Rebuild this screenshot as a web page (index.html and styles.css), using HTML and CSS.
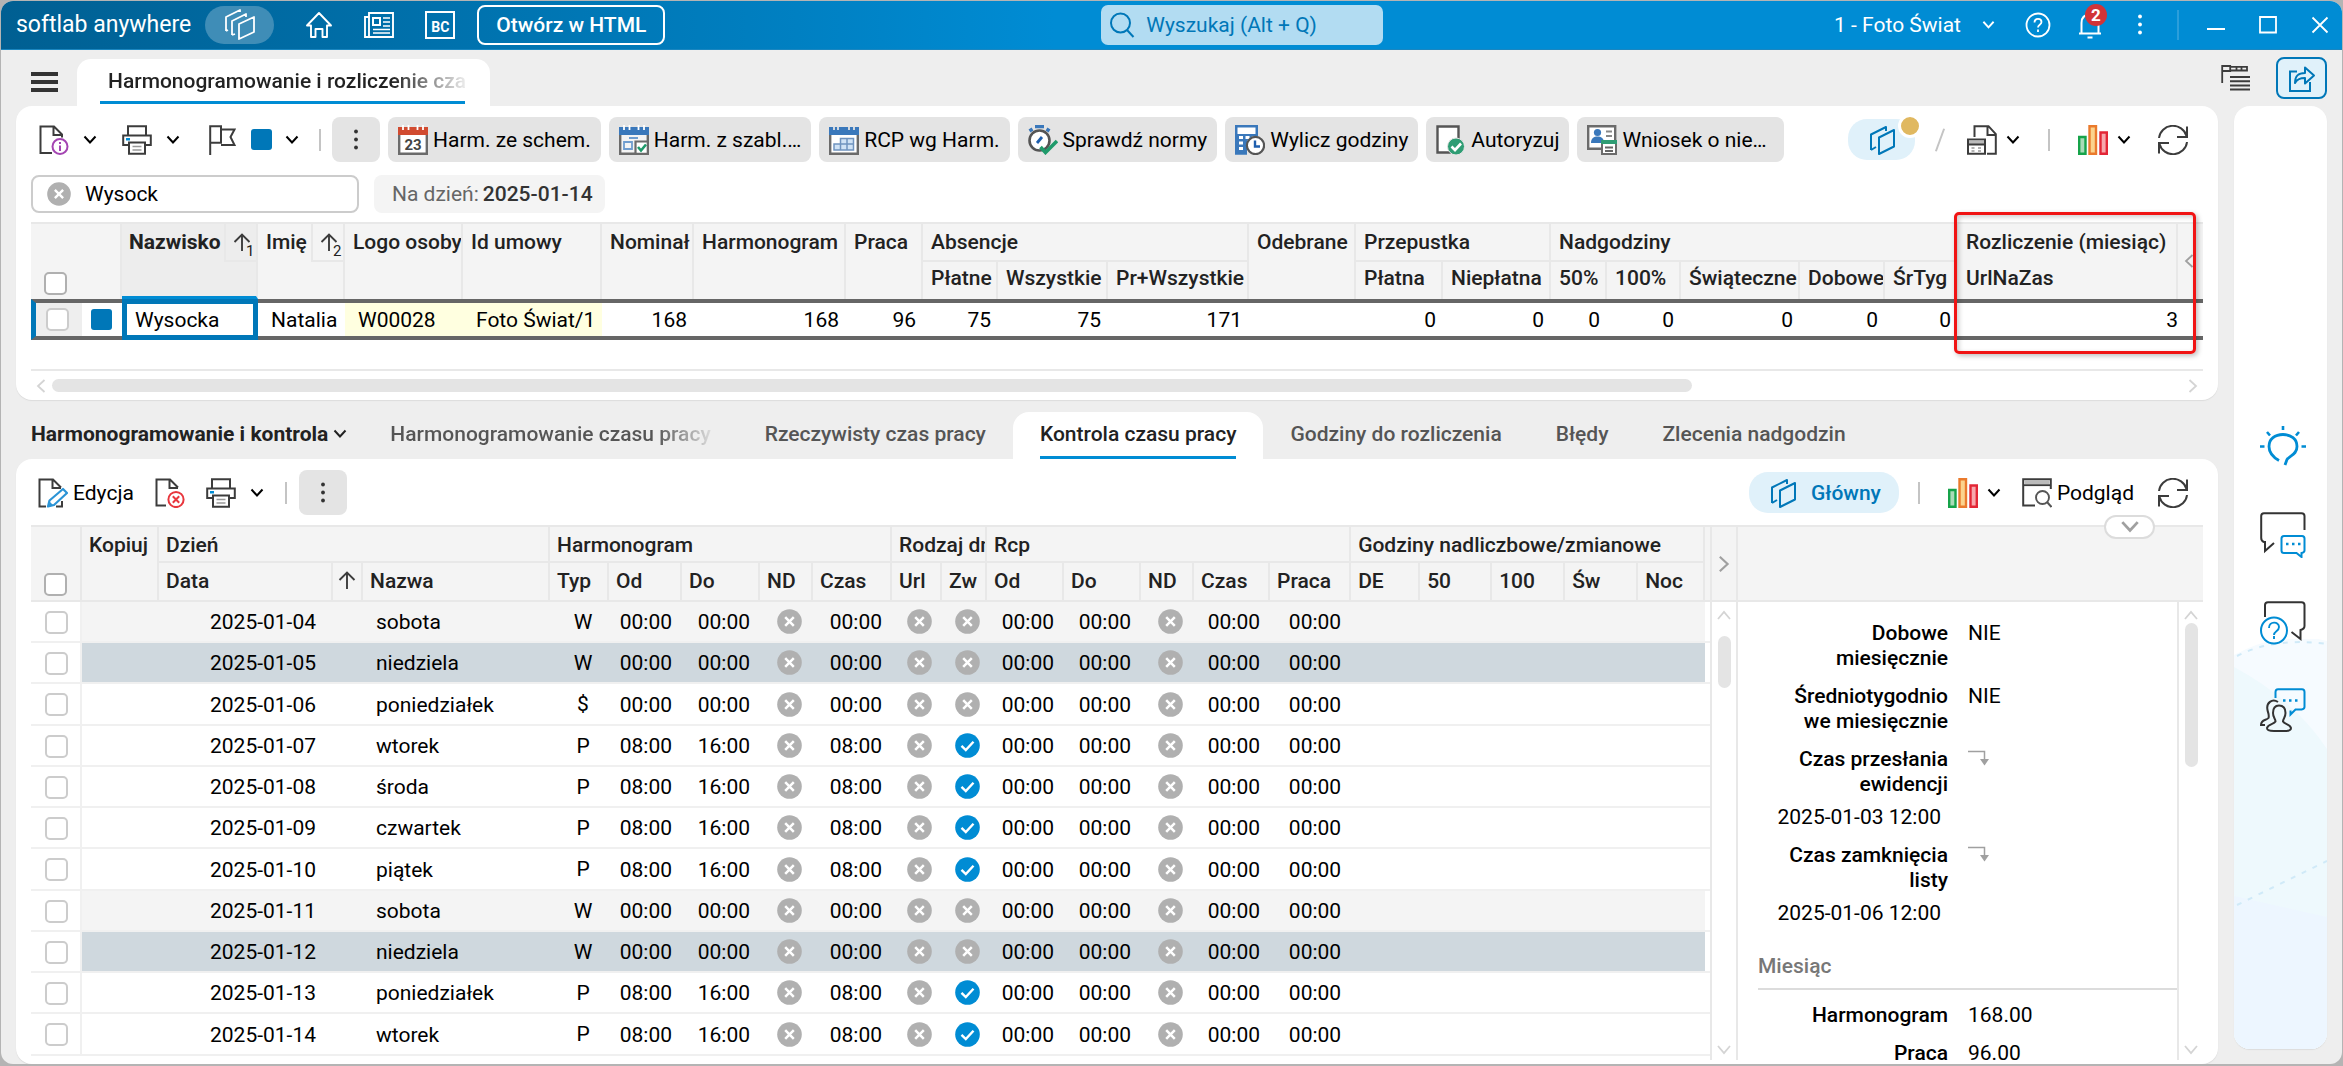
FILE: index.html
```html
<!DOCTYPE html>
<html lang="pl">
<head>
  <meta charset="UTF-8">
  <meta name="viewport" content="width=device-width, initial-scale=1.0">
  <title>softlab anywhere</title>
  <link rel="stylesheet" href="styles.css">
</head>
<body>
  <!-- Icon sprite -->
  <svg class="sprite" aria-hidden="true">
    <symbol id="i-chevron" viewBox="0 0 14 10"><path d="M1.500 1.500 7 7.500l5.500-6" fill="none" stroke="currentColor" stroke-width="2"/></symbol>
    <symbol id="i-more" viewBox="0 0 30 30"><g fill="currentColor"><circle cx="15" cy="6.500" r="1.900"/><circle cx="15" cy="14.500" r="1.900"/><circle cx="15" cy="22.500" r="1.900"/></g></symbol>
    <symbol id="i-cards" viewBox="0 0 30 30"><path d="M4 25V9.500L19 2v4M4 25l5-3M12 12.500 27 5v16.500L12 29z" fill="none" stroke="currentColor" stroke-width="2" stroke-linejoin="round"/></symbol>
    <symbol id="i-stack" viewBox="0 0 34 32"><path d="M3 22V8L17 1v2M3 22l2-1M9 26V12L23 5v3M9 26l3-1M16 15l15-7v15l-15 7z" fill="none" stroke="currentColor" stroke-width="1.800" stroke-linejoin="round"/></symbol>
    <symbol id="i-doc-info" viewBox="0 0 30 30"><path d="M13 28H1.500V1.500H15l8 8v3M14.500 2v8H23" fill="none" stroke="#3c3c3c" stroke-width="2"/><circle cx="21" cy="21.500" r="7.500" fill="#fff" stroke="#a445b2" stroke-width="2"/><path d="M21 17v2M21 20.500v5.500" stroke="#a445b2" stroke-width="2"/></symbol>
    <symbol id="i-print" viewBox="0 0 30 30"><path d="M6 10V1.200h18V10M6 20H1.200V10.500h27.600V20H24" fill="none" stroke="#3c3c3c" stroke-width="2"/><path d="M7 17.500h16v11.200H7z" fill="#fff" stroke="#3c3c3c" stroke-width="2"/><path d="M10.500 21.500h9M10.500 25h9" stroke="#999" stroke-width="1.600"/><path d="M4 13h4v2.500H4z" fill="#008cd4"/></symbol>
    <symbol id="i-flag" viewBox="0 0 30 30"><path d="M2.200 30V1.200H13v16.500H2.200M13 4.500h13.500l-4 7.500 4 8H13" fill="none" stroke="#3c3c3c" stroke-width="2"/></symbol>
    <symbol id="i-cal-check" viewBox="0 0 30 30"><path d="M1.200 8h27.600v20.800H1.200z" fill="#f4f4f4" stroke="#6b6b6b" stroke-width="2.400"/><path d="M0 2h30v8H0z" fill="#3a78bb"/><path d="M5 0v5M10.500 0v5M19.500 0v5M25 0v5" stroke="#fff" stroke-width="1.800"/><path d="M5 17h8v7H5zM10 13h9" fill="none" stroke="#6f9dcf" stroke-width="1.800"/><path d="M16.500 16.500h12.300v12.300H16.500z" fill="#fff" stroke="#6b6b6b" stroke-width="2.200"/><path d="m19 22 3 3.500 5-6" fill="none" stroke="#1f9a6b" stroke-width="2.600"/></symbol>
    <symbol id="i-cal-grid" viewBox="0 0 30 30"><path d="M1.200 8h27.600v20.800H1.200z" fill="#fff" stroke="#6b6b6b" stroke-width="2.400"/><path d="M0 2h30v8H0z" fill="#3a78bb"/><path d="M5 0v5M9 0v5M20 0v5M25 0v5" stroke="#e4e4e4" stroke-width="1.800"/><path d="M5 19h6.500v6H5zM11.500 19H18v6h-6.500zM18 19h6.500v6H18zM11.500 13.500H18V19h-6.500zM18 13.500h6.500V19H18z" fill="#cfe2f5" stroke="#6f93bf" stroke-width="1.500"/></symbol>
    <symbol id="i-stopwatch" viewBox="0 0 30 30"><path d="M7 1.500h9M1.500 6l3-2M18.500 4l3 2" stroke="#3a78bb" stroke-width="3.400"/><circle cx="11.500" cy="15.500" r="10" fill="#fff" stroke="#555" stroke-width="2.600"/><path d="m9 18 5-6" stroke="#1f5fae" stroke-width="2.800"/><path d="m12.500 22 5 5.500L29 16" fill="none" stroke="#1f9a6b" stroke-width="3.600"/></symbol>
    <symbol id="i-calc-clock" viewBox="0 0 30 30"><path d="M1.200 1.200h20.600V28.500H1.200z" fill="#3a78bb" stroke="#3a78bb" stroke-width="2.400"/><path d="M2.500 2.500h18V9h-18z" fill="#fff"/><path d="M4 12.500h4M10.500 12.500h4M4 18h4M4 23.500h4" stroke="#fff" stroke-width="3.200"/><path d="M12 30V16l5-4.500h6V30z" fill="#e4e4e4"/><circle cx="20.500" cy="20.500" r="8.600" fill="#fff" stroke="#555" stroke-width="2.200"/><path d="M20 15.500v6h5" fill="none" stroke="#1f5fae" stroke-width="2.400"/></symbol>
    <symbol id="i-doc-ok" viewBox="0 0 30 30"><path d="M1.500 1.500h21v26h-21z" fill="#fff" stroke="#555" stroke-width="2.400"/><circle cx="20" cy="21.500" r="8.500" fill="#2f9d74" stroke="#e4e4e4" stroke-width="1"/><path d="m15.500 21.500 3.500 3.500 6-6.500" fill="none" stroke="#fff" stroke-width="2.600"/></symbol>
    <symbol id="i-request" viewBox="0 0 30 30"><path d="M1.200 1.200h27v22.600h-27z" fill="#fff" stroke="#6b6b6b" stroke-width="2.400"/><circle cx="10.500" cy="7.500" r="3.600" fill="#3a78bb"/><path d="M4 18c0-5 3-6.500 6.500-6.500S17 13 17 18z" fill="#3a78bb"/><path d="M19 6.500h6M19 11h6" stroke="#888" stroke-width="1.800"/><path d="M15 16h14v13H15z" fill="#fff" stroke="#6b6b6b" stroke-width="2"/><path d="M14 15h16v4H14z" fill="#2f9d74"/><path d="M18 22.500h8M18 26h8" stroke="#666" stroke-width="1.800"/></symbol>
    <symbol id="i-doc-table" viewBox="0 0 30 30"><path d="M7.500 12V1.200h14l7.300 8v19.600H20M20.500 2v8h8" fill="none" stroke="#3c3c3c" stroke-width="2"/><path d="M1 14.500h17v14.300H1z" fill="#fff" stroke="#3c3c3c" stroke-width="2"/><path d="M2 15.500h15v3.500H2z" fill="#bbb"/><path d="M1 19.500h17" stroke="#3c3c3c" stroke-width="1.800"/><path d="M4.500 23h3M11 23h3M4.500 26h3M11 26h3" stroke="#999" stroke-width="1.600"/></symbol>
    <symbol id="i-chart" viewBox="0 0 30 30"><path d="M1.200 12h6.300v16.800H1.200z" fill="#a9dbb8" stroke="#16a34a" stroke-width="2.400"/><path d="M11.500 1.200h6.500v27.600h-6.500z" fill="#fbd38d" stroke="#ea7a2c" stroke-width="2.400"/><path d="M22.500 7.500h6.300v21.300h-6.300z" fill="#f7a8ad" stroke="#e32636" stroke-width="2.400"/></symbol>
    <symbol id="i-refresh" viewBox="0 0 30 30"><path d="M1 13A14 13.500 0 0 1 28.500 11M29 17A14 13.500 0 0 1 1.500 19M29 1.500v10.500H19M1 28.500V18h10" fill="none" stroke="#3c3c3c" stroke-width="2"/></symbol>
    <symbol id="i-doc-edit" viewBox="0 0 30 30"><path d="M8 28.500H1.500V1.500H15l8 8M14.500 2v8h8.500M24 23v5.500h-6" fill="none" stroke="#3c3c3c" stroke-width="2"/><path d="M10 28.500l1.500-6L25 11l4 4-13 12z" fill="#fff" stroke="#2b94d6" stroke-width="2.200" stroke-linejoin="round"/><path d="m10 28.800 5-1.800-3-3z" fill="#2b94d6"/></symbol>
    <symbol id="i-doc-del" viewBox="0 0 30 30"><path d="M11 27.500H1.500V1.500H15l8 8M14.500 2v8h8.500" fill="none" stroke="#3c3c3c" stroke-width="2"/><circle cx="21" cy="21.500" r="7.600" fill="#fff" stroke="#e8363d" stroke-width="2"/><path d="m17.800 18.300 6.400 6.400M24.200 18.300l-6.400 6.400" stroke="#e8363d" stroke-width="2"/></symbol>
    <symbol id="i-preview" viewBox="0 0 30 30"><path d="M13 27.500H1.200V1.200h27.600V11" fill="none" stroke="#3c3c3c" stroke-width="2"/><path d="M2.500 2h25v4.500h-25z" fill="#bbb"/><path d="M1 7.200h28" stroke="#3c3c3c" stroke-width="1.800"/><circle cx="20.500" cy="19.500" r="6.500" fill="#fff" stroke="#555" stroke-width="1.900"/><path d="m25 24 4.500 5" stroke="#555" stroke-width="2"/></symbol>
    <symbol id="i-no" viewBox="0 0 25 25"><circle cx="12.500" cy="12.500" r="12.300" fill="#b0b0b0"/><path d="m8.200 8.200 8.600 8.600M16.800 8.200l-8.600 8.600" stroke="#fff" stroke-width="2.500"/></symbol>
    <symbol id="i-yes" viewBox="0 0 25 25"><circle cx="12.500" cy="12.500" r="12.300" fill="#008cd4"/><path d="m6.500 12.800 4.300 4.200 7.700-8.300" fill="none" stroke="#fff" stroke-width="2.400"/></symbol>
    <symbol id="i-up" viewBox="0 0 18 18"><path d="M9 18V2M1.500 9 9 1.500 16.500 9" fill="none" stroke="#3c3c3c" stroke-width="1.900"/></symbol>
    <symbol id="i-thin-left" viewBox="0 0 10 14"><path d="M8.500 1 2 7l6.500 6" fill="none" stroke="currentColor" stroke-width="1.800"/></symbol>
    <symbol id="i-thin-right" viewBox="0 0 10 14"><path d="M1.500 1 8 7l-6.500 6" fill="none" stroke="currentColor" stroke-width="1.800"/></symbol>
    <symbol id="i-thin-up" viewBox="0 0 14 10"><path d="M1 9l6-7 6 7" fill="none" stroke="currentColor" stroke-width="1.800"/></symbol>
    <symbol id="i-thin-down" viewBox="0 0 14 10"><path d="M1 1l6 7 6-7" fill="none" stroke="currentColor" stroke-width="1.800"/></symbol>
    <symbol id="i-below" viewBox="0 0 22 16"><path d="M0 1.500h16.500V12" fill="none" stroke="#a0a0a0" stroke-width="1.500"/><path d="M12 9h9l-4.500 6.500z" fill="#a0a0a0"/></symbol>
  </svg>

  <div class="app">
    <header class="titlebar">
      <span class="brand">softlab anywhere</span>
      <button class="bar-btn pill" aria-label="Okna"><svg width="34" height="32"><use href="#i-stack"/></svg></button>
      <button class="bar-btn" aria-label="Start"><svg width="28" height="28" viewBox="0 0 28 28"><path d="M2 14.500 14 2l12 12.500h-4V26h-4.500v-8h-7v8H6V14.500z" fill="none" stroke="currentColor" stroke-width="1.900" stroke-linejoin="round"/></svg></button>
      <button class="bar-btn" aria-label="Aktualności"><svg width="30" height="26" viewBox="0 0 30 26"><path d="M5 5H1v20h27M5 1h24v24H5z" fill="none" stroke="currentColor" stroke-width="1.900"/><path d="M9 6h7v7H9z" fill="none" stroke="currentColor" stroke-width="2"/><path d="M19 6h7M19 10h7M19 14h7M9 17.500h17M9 21h17" stroke="currentColor" stroke-width="1.700"/></svg></button>
      <button class="bar-btn bc-btn" aria-label="BC"><span class="bc">BC</span></button>
      <button class="html-btn">Otwórz w HTML</button>
      <label class="search">
        <svg width="26" height="26" viewBox="0 0 26 26"><circle cx="11.500" cy="11" r="9.500" fill="none" stroke="#0077b8" stroke-width="2"/><path d="m18 18 6.500 7" stroke="#0077b8" stroke-width="2"/></svg>
        <input type="search" placeholder="Wyszukaj (Alt + Q)" aria-label="Wyszukaj">
      </label>
      <div class="account">
        <button class="bar-btn company">1 - Foto Świat <svg width="13" height="10"><use href="#i-chevron"/></svg></button>
        <button class="bar-btn" aria-label="Pomoc"><svg width="26" height="26" viewBox="0 0 26 26"><circle cx="13" cy="13" r="11.500" fill="none" stroke="currentColor" stroke-width="1.800"/><path d="M9.500 10.500c0-5 7-4.500 7-.5 0 3-3.500 2.500-3.500 5.500M13 17.500V20" fill="none" stroke="currentColor" stroke-width="1.800"/></svg></button>
        <button class="bar-btn bell" aria-label="Powiadomienia"><svg width="26" height="28" viewBox="0 0 26 28"><path d="M2 22.500h22M4.500 22V12C4.500 6 8 3.500 13 3.500S21.500 6 21.500 12v10M10.500 26.500h5" fill="none" stroke="currentColor" stroke-width="2"/></svg><span class="badge">2</span></button>
        <button class="bar-btn" aria-label="Więcej"><svg width="30" height="30"><use href="#i-more"/></svg></button>
      </div>
      <div class="window-btns">
        <button class="bar-btn" aria-label="Minimalizuj"><svg width="18" height="18" viewBox="0 0 18 18"><path d="M0 13h18" stroke="currentColor" stroke-width="2"/></svg></button>
        <button class="bar-btn" aria-label="Maksymalizuj"><svg width="18" height="18" viewBox="0 0 18 18"><path d="M1 1h16v15.500H1z" fill="none" stroke="currentColor" stroke-width="1.800"/></svg></button>
        <button class="bar-btn" aria-label="Zamknij"><svg width="18" height="18" viewBox="0 0 18 18"><path d="m1.500 1.500 15 15M16.500 1.500l-15 15" stroke="currentColor" stroke-width="1.800"/></svg></button>
      </div>
    </header>

    <nav class="doc-tabs">
      <button class="menu-btn" aria-label="Menu"><i></i><i></i><i></i></button>
      <a class="doc-tab" href="#"><span class="tab-text fade">Harmonogramowanie i rozliczenie czasu</span></a>
      <div class="doc-tools">
        <button class="icon-btn" aria-label="Układ"><svg width="30" height="28" viewBox="0 0 30 28"><path d="M1.200 19V2h8v5h-8M10 2.800h16v3.700H10M15.500 3v3.500M20.500 3v3.500" fill="none" stroke="#3c3c3c" stroke-width="1.800"/><path d="M9 13h20M9 17.200h20M9 21.400h20M9 25.600h20" stroke="#3c3c3c" stroke-width="2"/></svg></button>
        <button class="share-btn" aria-label="Udostępnij"><svg width="28" height="28" viewBox="0 0 28 28"><path d="M9 7.500H2V27h20v-9" fill="none" stroke="#0077b8" stroke-width="2"/><path d="M7 19c0-8 4-10 10-10V3.500l9 8-9 8v-5.500c-4 0-8 1-10 5z" fill="none" stroke="#0077b8" stroke-width="2" stroke-linejoin="round"/></svg></button>
      </div>
    </nav>

    <div class="workspace">
      <main class="main">
        <section class="card people">
          <div class="toolbar">
            <button class="split" aria-label="Informacje"><svg width="30" height="30"><use href="#i-doc-info"/></svg><svg width="14" height="10"><use href="#i-chevron"/></svg></button>
            <button class="split" aria-label="Drukuj"><svg width="30" height="30"><use href="#i-print"/></svg><svg width="14" height="10"><use href="#i-chevron"/></svg></button>
            <button class="split colour" aria-label="Flaga"><svg width="30" height="30"><use href="#i-flag"/></svg><span class="swatch"></span><svg width="14" height="10"><use href="#i-chevron"/></svg></button>
            <span class="sep"></span>
            <div class="actions">
              <button class="tool more" aria-label="Więcej"><svg width="30" height="30"><use href="#i-more"/></svg></button>
              <button class="tool"><svg width="30" height="30" viewBox="0 0 30 30"><path d="M1.200 8h27.600v20.800H1.200z" fill="#fff" stroke="#6b6b6b" stroke-width="2.400"/><path d="M0 2h30v8H0z" fill="#d14b30"/><path d="M5 0v5M10.500 0v5M19.500 0v5M25 0v5" stroke="#fff" stroke-width="1.800"/><text x="15" y="25" text-anchor="middle" class="cal-day">23</text></svg>Harm. ze schem.</button>
              <button class="tool"><svg width="30" height="30"><use href="#i-cal-check"/></svg>Harm. z szabl.…</button>
              <button class="tool"><svg width="30" height="30"><use href="#i-cal-grid"/></svg>RCP wg Harm.</button>
              <button class="tool"><svg width="30" height="30"><use href="#i-stopwatch"/></svg>Sprawdź normy</button>
              <button class="tool"><svg width="30" height="30"><use href="#i-calc-clock"/></svg>Wylicz godziny</button>
              <button class="tool"><svg width="30" height="30"><use href="#i-doc-ok"/></svg>Autoryzuj</button>
              <button class="tool wide"><svg width="30" height="30"><use href="#i-request"/></svg>Wniosek o nie…</button>
            </div>
            <div class="right">
              <button class="view-pill small" aria-label="Widok"><svg width="30" height="30"><use href="#i-cards"/></svg><span class="dot"></span></button>
              <span class="slash"></span>
              <button class="split tight" aria-label="Widok tabeli"><svg width="30" height="30"><use href="#i-doc-table"/></svg><svg width="14" height="10"><use href="#i-chevron"/></svg></button>
              <span class="sep"></span>
              <button class="split tight" aria-label="Wykres"><svg width="30" height="30"><use href="#i-chart"/></svg><svg width="14" height="10"><use href="#i-chevron"/></svg></button>
              <button class="icon-btn" aria-label="Odśwież"><svg width="30" height="30"><use href="#i-refresh"/></svg></button>
            </div>
          </div>

          <div class="filters">
            <label class="filter"><svg width="24" height="24"><use href="#i-no"/></svg><input type="text" value="Wysock" aria-label="Filtr"></label>
            <button class="chip">Na dzień: <b>2025-01-14</b></button>
          </div>

          <div class="grid-wrap">
            <table class="grid people-grid">
              <colgroup>
                <col style="width:51px"><col style="width:40px"><col style="width:136px"><col style="width:87px"><col style="width:118px"><col style="width:139px"><col style="width:92px"><col style="width:152px"><col style="width:77px"><col style="width:75px"><col style="width:110px"><col style="width:141px"><col style="width:107px"><col style="width:87px"><col style="width:108px"><col style="width:56px"><col style="width:74px"><col style="width:119px"><col style="width:85px"><col style="width:73px"><col style="width:220px"><col>
              </colgroup>
              <thead>
                <tr>
                  <th rowspan="2" colspan="2" class="check"><input type="checkbox" aria-label="Zaznacz wszystkie"></th>
                  <th rowspan="2" class="sorted"><div class="sort-head"><span>Nazwisko</span><span class="sort"><svg width="18" height="18"><use href="#i-up"/></svg><sub>1</sub></span></div></th>
                  <th rowspan="2" class="has-sort"><div class="sort-head"><span>Imię</span><span class="sort"><svg width="18" height="18"><use href="#i-up"/></svg><sub>2</sub></span></div></th>
                  <th rowspan="2">Logo osoby</th>
                  <th rowspan="2">Id umowy</th>
                  <th rowspan="2">Nominał</th>
                  <th rowspan="2">Harmonogram</th>
                  <th rowspan="2">Praca</th>
                  <th colspan="3" class="group">Absencje</th>
                  <th rowspan="2">Odebrane</th>
                  <th colspan="2" class="group">Przepustka</th>
                  <th colspan="5" class="group">Nadgodziny</th>
                  <th>Rozliczenie (miesiąc)</th>
                  <th rowspan="2" class="edge"><svg width="10" height="18"><use href="#i-thin-left"/></svg></th>
                </tr>
                <tr>
                  <th>Płatne</th><th>Wszystkie</th><th>Pr+Wszystkie</th>
                  <th>Płatna</th><th>Niepłatna</th>
                  <th>50%</th><th>100%</th><th>Świąteczne</th><th>Dobowe</th><th>ŚrTyg</th>
                  <th>UrlNaZas</th>
                </tr>
              </thead>
              <tbody>
                <tr>
                  <td class="check"><input type="checkbox" aria-label="Zaznacz Wysocka"></td>
                  <td class="mark"><span class="swatch"></span></td>
                  <td class="active">Wysocka</td>
                  <td class="text">Natalia</td>
                  <td class="text key">W00028</td>
                  <td class="text key">Foto Świat/1</td>
                  <td>168</td><td>168</td><td>96</td><td>75</td><td>75</td><td>171</td><td></td><td>0</td><td>0</td><td>0</td><td>0</td><td>0</td><td>0</td><td>0</td><td class="last">3</td><td></td>
                </tr>
              </tbody>
            </table>
            <div class="callout"></div>
          </div>
          <div class="hscroll">
            <svg width="10" height="14"><use href="#i-thin-left"/></svg>
            <div class="track"><div class="thumb"></div></div>
            <svg width="10" height="14"><use href="#i-thin-right"/></svg>
          </div>
        </section>

        <nav class="sub-tabs">
          <button class="section-btn">Harmonogramowanie i kontrola <svg width="14" height="10"><use href="#i-chevron"/></svg></button>
          <a href="#" class="fade">Harmonogramowanie czasu pracy</a>
          <a href="#">Rzeczywisty czas pracy</a>
          <a href="#" class="current"><span class="tab-text">Kontrola czasu pracy</span></a>
          <a href="#">Godziny do rozliczenia</a>
          <a href="#">Błędy</a>
          <a href="#">Zlecenia nadgodzin</a>
        </nav>

        <section class="card control">
          <div class="toolbar">
            <button class="plain"><svg width="30" height="30"><use href="#i-doc-edit"/></svg>Edycja</button>
            <button class="icon-btn del" aria-label="Usuń"><svg width="30" height="30"><use href="#i-doc-del"/></svg></button>
            <button class="split" aria-label="Drukuj"><svg width="30" height="30"><use href="#i-print"/></svg><svg width="14" height="10"><use href="#i-chevron"/></svg></button>
            <span class="sep"></span>
            <button class="tool more" aria-label="Więcej"><svg width="30" height="30"><use href="#i-more"/></svg></button>
            <div class="right">
              <button class="view-pill"><svg width="30" height="30"><use href="#i-cards"/></svg>Główny</button>
              <span class="sep"></span>
              <button class="split tight" aria-label="Wykres"><svg width="30" height="30"><use href="#i-chart"/></svg><svg width="14" height="10"><use href="#i-chevron"/></svg></button>
              <button class="plain"><svg width="30" height="30"><use href="#i-preview"/></svg>Podgląd</button>
              <button class="icon-btn" aria-label="Odśwież"><svg width="30" height="30"><use href="#i-refresh"/></svg></button>
            </div>
          </div>

          <div class="panes">
            <div class="days">
              <table class="grid days-grid">
                <colgroup>
                  <col style="width:51px"><col style="width:77px"><col style="width:174px"><col style="width:30px"><col style="width:187px"><col style="width:59px"><col style="width:73px"><col style="width:78px"><col style="width:53px"><col style="width:79px"><col style="width:50px"><col style="width:45px"><col style="width:77px"><col style="width:77px"><col style="width:53px"><col style="width:76px"><col style="width:81px"><col style="width:69px"><col style="width:72px"><col style="width:73px"><col style="width:73px"><col style="width:67px"><col>
                </colgroup>
                <thead>
                  <tr>
                    <th rowspan="2" class="check"><input type="checkbox" aria-label="Zaznacz wszystkie"></th>
                    <th rowspan="2">Kopiuj</th>
                    <th colspan="3" class="group">Dzień</th>
                    <th colspan="5" class="group">Harmonogram</th>
                    <th colspan="2" class="group">Rodzaj dnia</th>
                    <th colspan="5" class="group">Rcp</th>
                    <th colspan="5" class="group">Godziny nadliczbowe/zmianowe</th>
                    <th rowspan="2" class="filler"></th>
                  </tr>
                  <tr>
                    <th>Data</th><th class="arrow"><svg width="18" height="18"><use href="#i-up"/></svg></th><th>Nazwa</th>
                    <th>Typ</th><th>Od</th><th>Do</th><th>ND</th><th>Czas</th>
                    <th>Url</th><th>Zw</th>
                    <th>Od</th><th>Do</th><th>ND</th><th>Czas</th><th>Praca</th>
                    <th>DE</th><th>50</th><th>100</th><th>Św</th><th>Noc</th>
                  </tr>
                </thead>
                <tbody id="days"></tbody>
              </table>
            </div>
            <div class="splitter">
              <button class="pane-head" aria-label="Zwiń panel"><svg width="12" height="18"><use href="#i-thin-right"/></svg></button>
              <div class="vscroll">
                <svg width="14" height="10"><use href="#i-thin-up"/></svg>
                <div class="thumb rows-thumb"></div>
                <svg width="14" height="10" class="down"><use href="#i-thin-down"/></svg>
              </div>
            </div>
            <aside class="details">
              <div class="pane-head"></div>
              <button class="collapse" aria-label="Zwiń"><svg width="20" height="14"><use href="#i-chevron"/></svg></button>
              <div class="details-body">
                <dl class="fields">
                  <div class="field"><dt>Dobowe miesięcznie</dt><dd>NIE</dd></div>
                  <div class="field"><dt>Średniotygodnio we miesięcznie</dt><dd>NIE</dd></div>
                  <div class="field"><dt>Czas przesłania ewidencji</dt><dd><svg width="22" height="16"><use href="#i-below"/></svg></dd></div>
                  <div class="stamp">2025-01-03 12:00</div>
                  <div class="field"><dt>Czas zamknięcia listy</dt><dd><svg width="22" height="16"><use href="#i-below"/></svg></dd></div>
                  <div class="stamp">2025-01-06 12:00</div>
                  <h2>Miesiąc</h2>
                  <div class="field"><dt>Harmonogram</dt><dd>168.00</dd></div>
                  <div class="field"><dt>Praca</dt><dd>96.00</dd></div>
                </dl>
                <div class="vscroll">
                  <svg width="14" height="10"><use href="#i-thin-up"/></svg>
                  <div class="thumb details-thumb"></div>
                  <svg width="14" height="10" class="down"><use href="#i-thin-down"/></svg>
                </div>
              </div>
            </aside>
          </div>
        </section>
      </main>

      <aside class="rail">
        <svg class="rail-art" viewBox="0 0 93 410" preserveAspectRatio="none">
          <path d="M0 16Q48-10 93 2V410H0z" fill="#f6fbff"/>
          <path d="M0 28Q60 60 93 110V410H0z" fill="#eef9fd"/>
          <path d="M0 257L93 278V410H0z" fill="#edf6ff"/>
          <path d="M3 17Q40-2 93 5M3 266L93 222" fill="none" stroke="#d0eaf8" stroke-width="2" stroke-dasharray="5 7"/>
        </svg>
        <button class="icon-btn" aria-label="Podpowiedzi"><svg width="46" height="44" viewBox="0 0 46 44"><path d="M19 35.500C11 31 9 26 9 21.500 9 14 15 9.500 23 9.500s14 4.500 14 12c0 8-7 9-10 13l-2 5.500" fill="none" stroke="#008cd4" stroke-width="2.800"/><path d="M23 1v4M7 7l3 3.500M39 7l-3 3.500M0 21.500h4.500M41.500 21.500H46" stroke="#008cd4" stroke-width="2.600"/></svg></button>
        <button class="icon-btn" aria-label="Czat"><svg width="46" height="46" viewBox="0 0 46 46"><path d="M44.500 18V4Q44.500 1.200 41.500 1.200H4Q1.200 1.200 1.200 4v22Q1.200 29 4 30h1v9l9-8" fill="none" stroke="#333" stroke-width="2"/><path d="M24 24h18q2.500 0 2.500 2.500v12q0 2-3 2.500v4l-5-4H24q-2.500 0-2.500-2.500v-12Q21.500 24 24 24z" fill="#fff" stroke="#008cd4" stroke-width="2"/><path d="M26 32h2.500M32 32h2.500M38 32h2.500" stroke="#008cd4" stroke-width="2.500"/></svg></button>
        <button class="icon-btn" aria-label="Pytania"><svg width="46" height="44" viewBox="0 0 46 44"><path d="M5 16V4q0-2.800 3-2.800h33.500q3 0 3 2.800v21q0 3-4 4v9l-9-7" fill="none" stroke="#333" stroke-width="2"/><circle cx="14" cy="29.500" r="13" fill="#fff" stroke="#008cd4" stroke-width="2"/><path d="M9 27c0-7 10-7 10-1 0 4.500-5 4-5 8M14 35v3" fill="none" stroke="#008cd4" stroke-width="1.900"/></svg></button>
        <button class="icon-btn" aria-label="Społeczność"><svg width="46" height="44" viewBox="0 0 46 44"><path d="M15.500 10V4q0-2.800 2.500-2.800h24q2.500 0 2.500 2.800v15q0 2-3 2.500h-6l-5 5v-4" fill="none" stroke="#008cd4" stroke-width="2"/><path d="M23 12.500h2.500M29 12.500h2.500M35 12.500h2.500" stroke="#008cd4" stroke-width="2.500"/><path d="M18 14c-6-4-12 1-10.500 8 .5 3 2 5 1 8-2 2.500-7.500 1.500-7.500 7h4M14 43c-6 0-7-1-7-3 1-4 7-3.500 8.500-6.500 0-3-2.500-4-2.500-8.500C13 20 15 17.500 19 17.500S25.500 20 25.500 25c0 4.500-2.500 5.500-2.500 8.500 1.500 3 7 2.500 8 6.500 0 2-1 3-6 3z" fill="none" stroke="#333" stroke-width="2"/></svg></button>
      </aside>
    </div>
  </div>

  <script src="app.js"></script>
</body>
</html>
```
FILE: app.js
```js
const days = [
  { date: '2025-01-04', name: 'sobota', type: 'W' },
  { date: '2025-01-05', name: 'niedziela', type: 'W' },
  { date: '2025-01-06', name: 'poniedziałek', type: '$' },
  { date: '2025-01-07', name: 'wtorek', type: 'P' },
  { date: '2025-01-08', name: 'środa', type: 'P' },
  { date: '2025-01-09', name: 'czwartek', type: 'P' },
  { date: '2025-01-10', name: 'piątek', type: 'P' },
  { date: '2025-01-11', name: 'sobota', type: 'W' },
  { date: '2025-01-12', name: 'niedziela', type: 'W' },
  { date: '2025-01-13', name: 'poniedziałek', type: 'P' },
  { date: '2025-01-14', name: 'wtorek', type: 'P' }
];

const rowClass = { sobota: 'saturday', niedziela: 'sunday' };

function icon(on) {
  return `<td class="flag"><svg width="25" height="25"><use href="#${on ? 'i-yes' : 'i-no'}"/></svg></td>`;
}

function row(day) {
  const work = day.type === 'P';
  return `<tr class="${rowClass[day.name] || ''}">
    <td class="check"><input type="checkbox" aria-label="Zaznacz ${day.date}"></td>
    <td></td>
    <td class="date">${day.date}</td>
    <td></td>
    <td class="text">${day.name}</td>
    <td class="type">${day.type}</td>
    <td>${work ? '08:00' : '00:00'}</td>
    <td>${work ? '16:00' : '00:00'}</td>
    ${icon(false)}
    <td>${work ? '08:00' : '00:00'}</td>
    ${icon(false)}
    ${icon(work)}
    <td>00:00</td>
    <td>00:00</td>
    ${icon(false)}
    <td>00:00</td>
    <td>00:00</td>
    <td></td><td></td><td></td><td></td><td></td>
    <td class="filler"></td>
  </tr>`;
}

document.getElementById('days').innerHTML = days.map(row).join('');
```
FILE: styles.css
```css
:root {
  --blue: #008cd4;
  --blue-dark: #0077b8;
  --blue-light: #e0f1fa;
  --bg: #eeeeee;
  --head: #f4f4f4;
  --line: #e8e8e8;
  --text: #222222;
}

* {
  box-sizing: border-box;
}

html,
body {
  height: 100%;
}

body {
  margin: 0;
  padding: 1px 1px 2px;
  background: #b4b4b4;
  color: #000;
  font-family: Roboto, "Liberation Sans", sans-serif;
  font-size: 21px;
  line-height: 24px;
}

button,
input {
  font: inherit;
  color: inherit;
}

button {
  display: flex;
  align-items: center;
  padding: 0;
  border: 0;
  background: none;
  white-space: nowrap;
  cursor: pointer;
}

a {
  color: inherit;
  text-decoration: none;
}

svg {
  display: block;
  flex-shrink: 0;
}

.sprite {
  position: absolute;
  width: 0;
  height: 0;
}

.cal-day {
  font-size: 15px;
  font-weight: 700;
  fill: #444;
}

.app {
  display: flex;
  flex-direction: column;
  height: 100%;
  overflow: hidden;
  border-radius: 12px;
  background: var(--bg);
}

/* Title bar */
.titlebar {
  position: relative;
  display: flex;
  align-items: center;
  flex-shrink: 0;
  height: 49px;
  padding: 0 13px 0 15px;
  color: #fff;
  background: linear-gradient(90deg, #005f92 0, #0080c2 34%, var(--blue) 45%);
  border-bottom: 1px solid #1a86c0;
}

.brand {
  margin-right: 14px;
  font-size: 23px;
}

.bar-btn + .bar-btn {
  margin-left: 31px;
}

.pill {
  justify-content: center;
  width: 69px;
  height: 38px;
  border-radius: 19px;
  background: #3f8db7;
}

.bc {
  display: flex;
  align-items: flex-end;
  justify-content: center;
  width: 30px;
  height: 28px;
  border: 2px solid #fff;
  font-size: 14px;
  font-weight: 700;
  line-height: 19px;
}

.html-btn {
  height: 40px;
  margin-left: 22px;
  padding: 0 17px;
  border: 2px solid #fff;
  border-radius: 8px;
  font-weight: 500;
}

.search {
  position: absolute;
  left: 47%;
  top: 4px;
  display: flex;
  align-items: center;
  gap: 11px;
  width: 282px;
  height: 40px;
  padding: 0 8px;
  border-radius: 7px;
  background: #b2dcf2;
}

.search input {
  width: 100%;
  padding: 0;
  border: 0;
  outline: 0;
  background: none;
}

.search input::placeholder {
  color: var(--blue-dark);
  opacity: 1;
}

.account {
  display: flex;
  align-items: center;
  margin-left: auto;
  padding-right: 22px;
  border-right: 2px solid #2b9edb;
}

.account .bar-btn + .bar-btn {
  margin-left: 26px;
}

.company {
  gap: 21px;
  margin-right: 4px;
}

.bell {
  position: relative;
}

.account .bell + .bar-btn {
  margin-left: 22px;
}

.badge {
  position: absolute;
  left: 8px;
  top: -7px;
  width: 22px;
  height: 22px;
  border-radius: 50%;
  background: #d13438;
  font-size: 17px;
  font-weight: 700;
  line-height: 22px;
  text-align: center;
}

.window-btns {
  display: flex;
  margin-left: 28px;
}

.window-btns .bar-btn + .bar-btn {
  margin-left: 34px;
}

/* Document tabs */
.doc-tabs {
  display: flex;
  align-items: flex-end;
  flex-shrink: 0;
  height: 56px;
  padding: 0 15px 0 30px;
}

.menu-btn {
  flex-direction: column;
  gap: 4px;
  margin: 0 19px 14px 0;
}

.menu-btn i {
  width: 27px;
  height: 4px;
  background: #333;
}

.doc-tab {
  height: 47px;
  width: 413px;
  padding: 0 25px 0 23px;
  border-radius: 14px 14px 0 0;
  background: #fff;
  color: var(--text);
  font-weight: 500;
}

.tab-text {
  display: block;
  height: 45px;
  border-bottom: 3px solid var(--blue);
  line-height: 45px;
  white-space: nowrap;
}

.doc-tab .tab-text {
  padding-left: 8px;
  overflow: hidden;
  color: transparent;
  background: linear-gradient(90deg, var(--text) 80%, #fff 102%);
  background-clip: text;
}

.doc-tools {
  display: flex;
  align-items: center;
  gap: 25px;
  margin: 0 0 7px auto;
}

.share-btn {
  justify-content: center;
  width: 51px;
  height: 42px;
  border: 2px solid var(--blue-dark);
  border-radius: 8px;
  background: var(--blue-light);
}

/* Layout */
.workspace {
  display: flex;
  flex: 1;
  gap: 16px;
  min-height: 0;
  padding: 0 15px;
}

.main {
  display: flex;
  flex: 1;
  flex-direction: column;
  min-width: 0;
}

.card {
  padding: 11px 15px 0;
  border-radius: 16px;
  background: #fff;
  box-shadow: 0 1px 1px #dcdcdc;
}

/* Toolbars */
.toolbar {
  display: flex;
  align-items: center;
  height: 45px;
  padding: 0 15px 0 8px;
}

.split {
  gap: 14px;
  margin-right: 25px;
}

.split.tight {
  gap: 9px;
}

.colour {
  gap: 13px;
  margin: 0 20px 0 3px;
}

.swatch {
  display: block;
  width: 21px;
  height: 21px;
  border-radius: 3px;
  background: var(--blue-dark);
}

.sep {
  width: 2px;
  height: 22px;
  background: #c4c4c4;
}

.actions {
  display: flex;
  gap: 8px;
  margin-left: 11px;
}

.tool {
  gap: 5px;
  height: 45px;
  padding: 0 10px;
  border-radius: 8px;
  background: #e4e4e4;
}

.tool.more {
  justify-content: center;
  width: 48px;
  padding: 0;
  color: #333;
}

.tool.wide {
  padding-right: 17px;
}

.plain {
  gap: 5px;
}

.del {
  margin: 0 21px;
}

.control .toolbar {
  padding-left: 7px;
}

.control .split {
  margin-right: 21px;
}

.control .tool.more {
  margin-left: 12px;
}

.right {
  display: flex;
  align-items: center;
  margin-left: auto;
}

.right .split,
.control .right .split {
  margin-right: 0;
}

.right .sep {
  margin: 0 28px;
}

.control .right .sep {
  margin: 0 28px 0 19px;
}

.right .icon-btn {
  margin-left: 27px;
}

.right .plain {
  margin-left: 21px;
}

.control .right .icon-btn {
  margin-left: 24px;
}

.view-pill {
  position: relative;
  gap: 13px;
  height: 41px;
  padding: 0 18px 0 19px;
  border-radius: 19px;
  background: var(--blue-light);
  color: var(--blue-dark);
  font-weight: 500;
}

.dot {
  position: absolute;
  right: -7px;
  top: -5px;
  width: 24px;
  height: 24px;
  border: 3px solid #fff;
  border-radius: 50%;
  background: #e0b860;
}

.slash {
  width: 2px;
  height: 24px;
  margin: 0 26px 0 24px;
  background: #c4c4c4;
  transform: rotate(20deg);
}

/* Filters */
.filters {
  display: flex;
  gap: 15px;
  margin: 13px 0 9px;
}

.filter {
  display: flex;
  align-items: center;
  gap: 14px;
  width: 328px;
  height: 38px;
  padding: 0 14px;
  border: 2px solid #cccccc;
  border-radius: 8px;
}

.filter input {
  width: 100%;
  padding: 0;
  border: 0;
  outline: 0;
}

.chip {
  gap: 4px;
  padding: 0 12px 0 18px;
  border-radius: 8px;
  background: var(--head);
  color: #666;
}

.chip b {
  color: #333;
  font-weight: 500;
}

/* Grids */
.grid-wrap {
  position: relative;
  height: 147px;
}

.grid {
  width: 100%;
  table-layout: fixed;
  border-spacing: 0;
  border-top: 2px solid var(--line);
}

.grid th {
  overflow: hidden;
  padding: 6px 0 0 8px;
  border-right: 2px solid var(--line);
  background: var(--head);
  color: var(--text);
  font-weight: 500;
  text-align: left;
  vertical-align: top;
  white-space: nowrap;
}

.grid th.group {
  border-bottom: 2px solid var(--line);
}

.grid tr + tr th {
  padding-top: 4px;
}

.grid td {
  padding: 0 7px 0 0;
  text-align: right;
  white-space: nowrap;
}

.days-grid th {
  padding-left: 7px;
}

.grid th.check {
  padding: 0 0 4px 13px;
  vertical-align: bottom;
}

input[type="checkbox"] {
  display: block;
  width: 23px;
  height: 23px;
  margin: 0;
  appearance: none;
  border: 2px solid #cccccc;
  border-radius: 5px;
  background: #fff;
}

th input[type="checkbox"] {
  border-color: #b0b0b0;
}

.people-grid thead tr {
  height: 38px;
}

.people-grid tr + tr {
  height: 37px;
}

.people-grid tbody tr {
  height: 41px;
}

.people-grid tbody td {
  height: 41px;
  border-top: 4px solid #666;
  border-bottom: 4px solid #666;
}

.people-grid td.check {
  padding-left: 10px;
  border-left: 5px solid var(--blue-dark);
  background: #eee;
}

.people-grid td.mark {
  padding-left: 9px;
}

.people-grid td.active {
  padding-left: 8px;
  border: 5px solid var(--blue-dark);
  text-align: left;
}

.grid td.text {
  padding-left: 13px;
  text-align: left;
}

.grid td.key {
  background: #ffffe0;
}

.grid td.last {
  padding-right: 0;
}

.grid th.sorted {
  padding: 0 0 0 7px;
  background: #ededed;
  border-bottom: 3px solid var(--blue);
  font-weight: 700;
}

.grid th.has-sort {
  padding-top: 0;
}

.sort-head {
  display: flex;
  justify-content: space-between;
  height: 38px;
  line-height: 36px;
}

.sort {
  display: flex;
  width: 32px;
  padding: 9px 0 0 7px;
  border: 2px solid var(--line);
  border-width: 0 0 2px 2px;
}

.sort sub {
  margin: 6px 0 0 -5px;
  font-size: 15px;
  font-weight: 400;
  line-height: 24px;
}

.grid th.edge {
  padding: 28px 0 0 6px;
  border-right: 0;
  color: #a0a0a0;
}

.callout {
  position: absolute;
  right: 7px;
  top: -10px;
  width: 242px;
  height: 142px;
  border: 3px solid #f01414;
  border-radius: 5px;
  box-shadow: 2px 2px 5px rgba(0, 0, 0, 0.25), inset 2px 2px 5px rgba(0, 0, 0, 0.2);
}

/* Scrollbars */
.hscroll {
  display: flex;
  align-items: center;
  height: 31px;
  padding: 0 5px;
  border-top: 2px solid var(--line);
  color: #d4d4d4;
}

.track {
  flex: 1;
  margin: 0 6px;
}

.thumb {
  border-radius: 7px;
  background: #e4e4e4;
}

.track .thumb {
  width: 77%;
  height: 13px;
}

.vscroll {
  display: flex;
  flex: 1;
  flex-direction: column;
  align-items: center;
  padding: 8px 0 5px;
  color: #d4d4d4;
}

.vscroll .thumb {
  width: 13px;
}

.rows-thumb {
  height: 52px;
  margin-top: 16px;
}

.details-thumb {
  height: 144px;
  margin-top: 3px;
}

.down {
  margin-top: auto;
}

/* Lower tabs */
.sub-tabs {
  display: flex;
  align-items: flex-end;
  flex-shrink: 0;
  height: 59px;
  padding-left: 15px;
  color: #555;
  font-weight: 500;
  line-height: 50px;
}

.section-btn {
  gap: 5px;
  height: 50px;
  margin-right: 16px;
  color: var(--text);
  font-weight: 700;
}

.sub-tabs a {
  padding: 0 27px;
  white-space: nowrap;
}

.sub-tabs a.fade {
  color: transparent;
  background: linear-gradient(90deg, #555 78%, #ddd 93%);
  background-clip: text;
}

.sub-tabs .current {
  height: 47px;
  border-radius: 16px 16px 0 0;
  background: #fff;
  color: var(--text);
}

.current .tab-text {
  height: 47px;
}

/* Lower card */
.control {
  display: flex;
  flex: 1;
  flex-direction: column;
  min-height: 0;
  padding-bottom: 4px;
}

.control .toolbar {
  flex-shrink: 0;
  margin-bottom: 10px;
}

.panes {
  display: flex;
  flex: 1;
  min-height: 0;
}

.days {
  flex: 1;
  min-width: 0;
  overflow: hidden;
}

.days-grid thead tr {
  height: 36px;
}

.days-grid thead tr + tr {
  height: 39px;
}

.days-grid thead th[rowspan],
.days-grid tr + tr th {
  border-bottom: 2px solid var(--line);
}

.days-grid tr + tr th {
  padding-top: 6px;
}

.days-grid tbody tr {
  height: 41px;
}

.days-grid tbody tr:nth-child(4n + 3) {
  height: 42px;
}

.days-grid td {
  padding: 1px 10px 0 0;
  border-bottom: 2px solid #f0f0f0;
}

.days-grid td.check {
  padding-left: 14px;
  border-right: 2px solid #f0f0f0;
  background: #fff;
}

.days-grid td.date {
  padding-right: 17px;
}

.days-grid td.type {
  padding: 0 0 0 7px;
  text-align: center;
}

.days-grid td.flag {
  padding: 0 0 0 5px;
}

.days-grid td.flag svg {
  margin: 0 auto;
}

.grid th.arrow {
  padding-left: 5px;
}

.grid .arrow svg {
  margin-top: 2px;
}

.saturday td {
  background: var(--head);
}

.sunday td {
  background: #cfd8de;
}

.days-grid th.filler {
  border-right: 0;
}

.days-grid td.filler {
  background: #fff;
}

.splitter {
  display: flex;
  flex-direction: column;
  width: 28px;
  border: 2px solid var(--line);
  border-width: 0 2px;
}

.pane-head {
  justify-content: center;
  flex-shrink: 0;
  height: 77px;
  border: 2px solid var(--line);
  border-width: 2px 0;
  background: var(--head);
  color: #a0a0a0;
}

.details {
  position: relative;
  display: flex;
  flex-direction: column;
  width: 465px;
}

.collapse {
  position: absolute;
  right: 48px;
  top: -10px;
  justify-content: center;
  width: 51px;
  height: 24px;
  border: 2px solid #dcdcdc;
  border-radius: 12px;
  background: #fff;
  color: #a0a0a0;
}

.details-body {
  display: flex;
  flex: 1;
  min-height: 0;
}

.fields {
  width: 441px;
  margin: 0;
  padding: 19px 0 0 20px;
  overflow: hidden;
  border-right: 2px solid var(--line);
}

.field {
  display: flex;
  gap: 20px;
  margin: 0 0 13px 30px;
  line-height: 25px;
}

.field dt {
  width: 160px;
  font-weight: 500;
  text-align: right;
}

.field dd {
  margin: 0;
}

.field dd svg {
  margin-top: 3px;
}

.stamp {
  width: 183px;
  margin: -5px 0 13px;
  line-height: 25px;
  text-align: right;
}

.fields h2 {
  margin: 28px 0 13px;
  padding-bottom: 10px;
  border-bottom: 2px solid #dcdcdc;
  color: #777;
  font-size: 21px;
  font-weight: 500;
}

/* Right rail */
.rail {
  position: relative;
  display: flex;
  flex-direction: column;
  align-items: center;
  gap: 43px;
  width: 93px;
  margin-bottom: 15px;
  padding: 319px 0 0 5px;
  overflow: hidden;
  border-radius: 16px;
  background: #fff;
  box-shadow: 0 1px 1px #dcdcdc;
}

.rail .icon-btn {
  position: relative;
}

.rail-art {
  position: absolute;
  left: 0;
  bottom: 0;
  width: 100%;
  height: 410px;
}
```
